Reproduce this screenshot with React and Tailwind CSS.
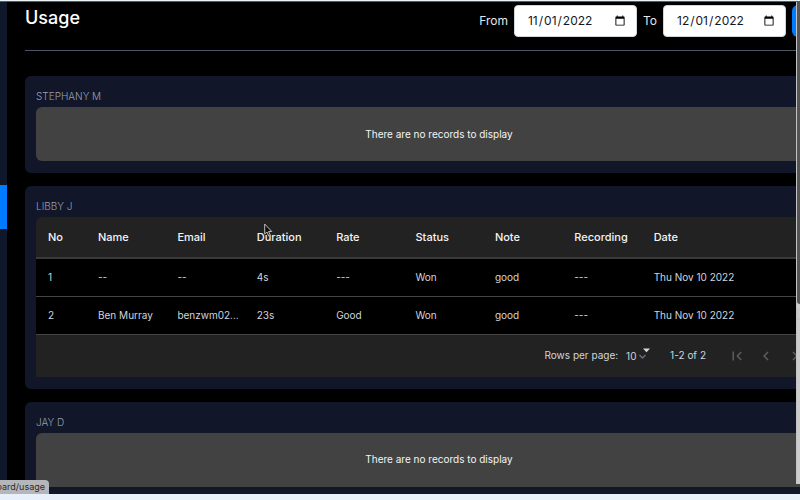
import { useState } from "react";

const groups = [
  { id: 1, user: "Stephany M", rows: [] },
  {
    id: 2,
    user: "Libby J",
    rows: [
      { name: "--", email: "--", duration: "4s", rate: "---", status: "Won", note: "good", recording: "---", date: "Thu Nov 10 2022" },
      { name: "Ben Murray", email: "benzwm02@gmail.com", duration: "23s", rate: "Good", status: "Won", note: "good", recording: "---", date: "Thu Nov 10 2022" },
    ],
  },
  { id: 3, user: "Jay D", rows: [] },
];

const columns = ["Name", "Email", "Duration", "Rate", "Status", "Note", "Recording", "Date"];

const pagerIcons = [
  { label: "First Page", d: "M18.41 16.59L13.82 12l4.59-4.59L17 6l-6 6 6 6zM6 6h2v12H6z" },
  { label: "Previous Page", d: "M15.41 7.41L14 6l-6 6 6 6 1.41-1.41L10.83 12z" },
  { label: "Next Page", d: "M10 6L8.59 7.41 13.17 12l-4.58 4.59L10 18l6-6z" },
  { label: "Last Page", d: "M5.59 7.41L10.18 12l-4.59 4.59L7 18l6-6-6-6zM16 6h2v12h-2z" },
];

function DateField({ id, label, value, onChange }) {
  return (
    <>
      <label htmlFor={id} className="text-xs text-gray-200">
        {label}
      </label>
      <input
        id={id}
        type="date"
        value={value}
        onChange={(e) => onChange(e.target.value)}
        className="h-8 w-[123px] rounded border border-gray-300 bg-white pr-2 pl-3 text-xs text-gray-900"
      />
    </>
  );
}

function Pagination({ total }) {
  return (
    <div className="flex h-[42px] items-center justify-end bg-[#222222] pr-1 text-[10px] text-gray-300">
      <label htmlFor="per-page">Rows per page:</label>
      <div className="relative mr-5 ml-2">
        <select
          id="per-page"
          defaultValue="10"
          className="block w-6 appearance-none bg-transparent text-[10px] leading-4"
        >
          <option>10</option>
          <option>15</option>
          <option>20</option>
        </select>
        <svg viewBox="0 0 14 14" className="pointer-events-none absolute top-0 left-3 h-[14px] w-[14px]">
          <path d="M1.500 7l3 3 3-3" fill="none" stroke="#6b7280" strokeWidth="1.3" />
          <path d="M5 0.500h7l-3.500 3.800z" fill="#d9d9d9" />
        </svg>
      </div>
      <span className="mr-4">
        1-{total} of {total}
      </span>
      {pagerIcons.map((icon) => (
        <button key={icon.label} type="button" aria-label={icon.label} disabled className="flex w-[29px] justify-center">
          <svg viewBox="0 0 24 24" className="h-[18px] w-[18px] fill-[#5c5c5c]">
            <path d={icon.d} />
          </svg>
        </button>
      ))}
    </div>
  );
}

function UsageTable({ rows }) {
  return (
    <div>
      <div className="overflow-hidden rounded-t-md">
        <table className="w-full table-fixed text-left">
          <thead className="bg-[#222222] text-[11px] text-gray-100">
            <tr className="h-[41px] border-b-2 border-[#3a3a3a]">
              <th className="w-[50px] px-3 font-medium">No</th>
              {columns.map((col) => (
                <th key={col} className="pl-3 font-medium">
                  {col}
                </th>
              ))}
              <td className="w-[121px]" />
            </tr>
          </thead>
          <tbody className="bg-black text-[10px] text-gray-300">
            {rows.map((row, i) => (
              <tr key={i} className="h-[38px] border-b border-[#444444]">
                <td className="px-3">{i + 1}</td>
                {columns.map((col) => (
                  <td key={col} className={col === "Date" ? "pl-3 whitespace-nowrap" : "truncate pl-3"}>
                    {row[col.toLowerCase()]}
                  </td>
                ))}
                <td />
              </tr>
            ))}
          </tbody>
        </table>
      </div>
      <Pagination total={rows.length} />
    </div>
  );
}

function UsageCard({ group }) {
  return (
    <section className="rounded-md bg-[#111628] px-[11px] pt-3 pb-3">
      <h2 className="mb-[2px] text-[10px] leading-[17px] font-light text-gray-400 uppercase">{group.user}</h2>
      {group.rows.length > 0 ? (
        <UsageTable rows={group.rows} />
      ) : (
        <div className="flex h-[54px] items-center justify-center rounded-md bg-[#424242] text-[10px] text-gray-100">
          There are no records to display
        </div>
      )}
    </section>
  );
}

export default function App() {
  const [from, setFrom] = useState("2022-11-01");
  const [to, setTo] = useState("2022-12-01");

  return (
    <div className="flex h-screen flex-col bg-black font-['Inter',sans-serif] text-white">
      <div className="h-[2px] shrink-0 border-b border-[#4b6068] bg-[#e8f4f8]" />

      <div className="relative flex min-h-0 flex-1 overflow-hidden">
        <aside className="w-2 shrink-0 border-r border-black bg-[#0f182a] pt-[183px]">
          <a href="#usage" aria-label="Usage" className="block h-11 bg-[#007bff]" />
        </aside>

        {/* content runs under the right edge of the window */}
        <main className="-mr-[53px] min-w-0 flex-1 pt-[3px] pl-[17px]">
          <header className="flex h-[46px] items-start justify-between border-b border-[#4b5563]">
            <h1 className="text-lg leading-[26px] font-medium">Usage</h1>
            <div className="flex items-center gap-[6px]">
              <DateField id="from" label="From" value={from} onChange={setFrom} />
              <DateField id="to" label="To" value={to} onChange={setTo} />
              <button type="button" aria-label="Search" className="h-8 w-[61px] rounded-md bg-[#007bff]" />
            </div>
          </header>

          <div className="mt-[25px] flex flex-col gap-[13px]">
            {groups.map((group) => (
              <UsageCard key={group.id} group={group} />
            ))}
          </div>
        </main>

        {/* edge of the neighbouring window */}
        <div className="absolute top-0 right-0 flex h-[482px] w-1 flex-col border-l border-[#c4c4c4] bg-[#cccccc]">
          <div className="h-[302px] rounded-bl-sm bg-[#555555]" />
          <div className="mt-[5px] h-[11px] border border-r-0 border-[#8fd8ea]" />
        </div>

        <svg viewBox="0 0 9 14" className="pointer-events-none absolute top-[221px] left-[264px] h-[14px] w-[9px]">
          <path d="M0.700 1v10l2.300-2 1.700 4 1.600-0.700-1.700-3.800h3.200z" fill="#111111" stroke="#bdbdbd" />
        </svg>

        <div className="absolute bottom-0 left-0 flex h-[14px] w-[49px] items-center justify-end overflow-hidden rounded-tr-sm bg-[#b5b6ba] pr-1 text-[9px] text-[#2b2c30]">
          dashboard/usage
        </div>
      </div>

      <div className="h-[6px] shrink-0 bg-[#e8f0fb]" />
    </div>
  );
}
